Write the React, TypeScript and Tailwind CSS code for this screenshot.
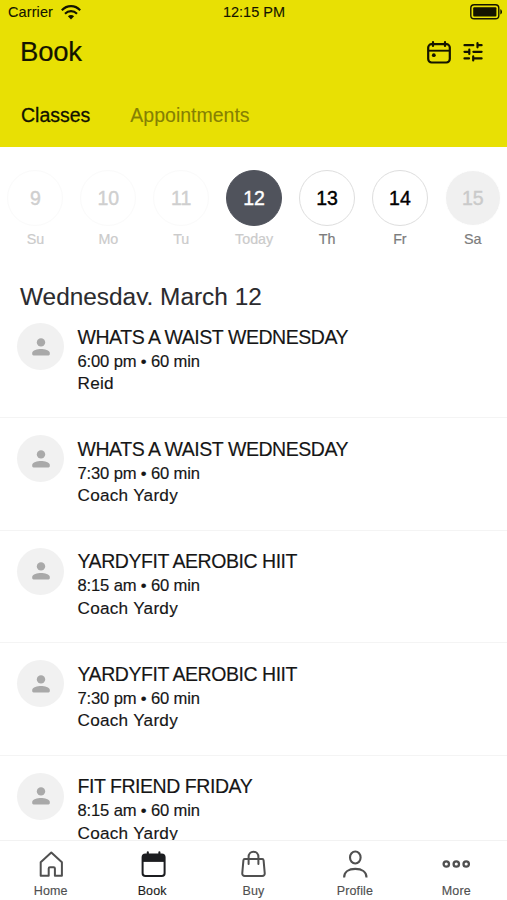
import React from 'react';
import clsx from 'clsx';

interface Day {
  date: number;
  label: string;
  state: 'past' | 'today' | 'open' | 'disabled';
}

interface ClassItem {
  id: number;
  title: string;
  time: string;
  coach: string;
}

const days: Day[] = [
  { date: 9, label: 'Su', state: 'past' },
  { date: 10, label: 'Mo', state: 'past' },
  { date: 11, label: 'Tu', state: 'past' },
  { date: 12, label: 'Today', state: 'today' },
  { date: 13, label: 'Th', state: 'open' },
  { date: 14, label: 'Fr', state: 'open' },
  { date: 15, label: 'Sa', state: 'disabled' },
];

const classes: ClassItem[] = [
  { id: 1, title: 'WHATS A WAIST WEDNESDAY', time: '6:00 pm • 60 min', coach: 'Reid' },
  { id: 2, title: 'WHATS A WAIST WEDNESDAY', time: '7:30 pm • 60 min', coach: 'Coach Yardy' },
  { id: 3, title: 'YARDYFIT AEROBIC HIIT', time: '8:15 am • 60 min', coach: 'Coach Yardy' },
  { id: 4, title: 'YARDYFIT AEROBIC HIIT', time: '7:30 pm • 60 min', coach: 'Coach Yardy' },
  { id: 5, title: 'FIT FRIEND FRIDAY', time: '8:15 am • 60 min', coach: 'Coach Yardy' },
];

const WifiIcon = () => (
  <svg width="20" height="15" viewBox="0 0 20 15" fill="none" stroke="currentColor" strokeWidth="2.1">
    <path d="M0.8 5.2C6 -0.3 14 -0.3 19.2 5.2" />
    <path d="M4 8.7C7.4 5.2 12.6 5.2 16 8.7" />
    <path d="M10 14.4L6.9 11.3C8.7 9.6 11.3 9.6 13.1 11.3Z" fill="currentColor" stroke="none" />
  </svg>
);

const BatteryIcon = () => (
  <svg width="33" height="16" viewBox="0 0 33 16" fill="none">
    <rect x="0.8" y="0.8" width="28" height="14" rx="3.4" stroke="currentColor" strokeWidth="1.4" />
    <rect x="3.2" y="3.2" width="23.2" height="9.2" rx="1" fill="currentColor" />
    <path d="M30.3 5.2C32.6 5.8 32.6 9.8 30.3 10.4Z" fill="currentColor" />
  </svg>
);

const CalendarIcon = () => (
  <svg width="24" height="23" viewBox="0 0 24 23" fill="none" stroke="currentColor" strokeWidth="2.2">
    <rect x="1.2" y="3.2" width="21.6" height="18.3" rx="3.4" />
    <path d="M1.2 9.7H22.8" strokeWidth="1.9" />
    <path d="M6 1.2V5M18 1.2V5" strokeLinecap="round" />
    <circle cx="6.8" cy="14.2" r="1.9" fill="currentColor" stroke="none" />
  </svg>
);

const TuneIcon = () => (
  <svg width="20" height="20" viewBox="0 0 20 20" fill="none" stroke="currentColor" strokeWidth="2.2" strokeLinecap="round">
    <path d="M1.5 3.2H10.3M14.5 3.2H18.6M14.5 1.2V5.3" />
    <path d="M1.5 9.8H6.3M6.3 7.7V11.9M10.4 9.8H18.6" />
    <path d="M1.5 16.4H6M10.2 16.4H18.6M10.2 14.4V18.5" />
  </svg>
);

const PersonIcon = () => (
  <svg width="18" height="18" viewBox="0 0 18 18" fill="currentColor">
    <circle cx="9" cy="4.4" r="4.2" />
    <path d="M0.2 15C0.2 12.2 5.5 11 9 11C12.5 11 17.8 12.2 17.8 15V16C17.8 16.8 17.3 17.4 16.5 17.4H1.5C0.7 17.4 0.2 16.8 0.2 16Z" />
  </svg>
);

const HomeIcon = () => (
  <svg width="28" height="28" viewBox="0 0 28 28" fill="none" stroke="currentColor" strokeWidth="2" strokeLinejoin="round">
    <path d="M3.7 12.3L14.3 2.6L24.9 12.3V25.8H17.9V18.6C17.9 17.8 17.4 17.3 16.6 17.3H13C12.2 17.3 11.7 17.8 11.7 18.6V25.8H3.7Z" />
  </svg>
);

const BookIcon = () => (
  <svg width="28" height="28" viewBox="0 0 28 28" fill="none" stroke="currentColor" strokeWidth="2">
    <rect x="4.6" y="4.4" width="22" height="21.6" rx="2.8" />
    <path d="M4.6 5H26.6V11.9H4.6Z" fill="currentColor" stroke="none" />
    <path d="M9.8 2.3V5M21.4 2.3V5" strokeWidth="2.1" strokeLinecap="round" />
  </svg>
);

const BagIcon = () => (
  <svg width="28" height="28" viewBox="0 0 28 28" fill="none" stroke="currentColor" strokeWidth="2" strokeLinecap="round" strokeLinejoin="round">
    <path d="M5.7 9H23.3C24.2 9 24.5 9.5 24.6 10.3L25.7 22.9C25.9 24.8 25 26 23.2 26H5.8C4 26 3.1 24.8 3.3 22.9L4.4 10.3C4.5 9.5 4.8 9 5.7 9Z" />
    <path d="M9.6 14V7C9.6 3.9 11.6 1.7 14.5 1.7C17.4 1.7 19.4 3.9 19.4 7V14" />
  </svg>
);

const ProfileIcon = () => (
  <svg width="28" height="28" viewBox="0 0 28 28" fill="none" stroke="currentColor" strokeWidth="2.1">
    <ellipse cx="14.3" cy="7.5" rx="5.3" ry="6" />
    <path d="M3.1 27.4C3.1 21.7 7.8 18.9 14.3 18.9C20.8 18.9 25.5 21.7 25.5 27.4" />
  </svg>
);

const MoreIcon = () => (
  <svg width="28" height="28" viewBox="0 0 28 28" fill="none" stroke="currentColor" strokeWidth="2.3">
    <circle cx="4.3" cy="14" r="2.7" />
    <circle cx="14.3" cy="14" r="2.7" />
    <circle cx="24.2" cy="14" r="2.7" />
  </svg>
);

const navItems = [
  { label: 'Home', icon: HomeIcon, active: false },
  { label: 'Book', icon: BookIcon, active: true },
  { label: 'Buy', icon: BagIcon, active: false },
  { label: 'Profile', icon: ProfileIcon, active: false },
  { label: 'More', icon: MoreIcon, active: false },
];

const Header: React.FC = () => (
  <header className="h-[147px] shrink-0 bg-[#e8e004] text-[#141400]">
    <div className="grid h-6 grid-cols-3 items-center pl-2 pr-1 text-[14.5px] leading-6 [-webkit-text-stroke:0.1px_currentColor]">
      <div className="flex items-center gap-2">
        <span className="tracking-[0.1px]">Carrier</span>
        <WifiIcon />
      </div>
      <span className="pr-[3px] text-center">12:15 PM</span>
      <div className="flex justify-end">
        <BatteryIcon />
      </div>
    </div>
    <div className="flex h-[56px] items-center justify-between pl-5 pr-6">
      <h1 className="text-[27.5px] tracking-[-0.2px] [-webkit-text-stroke:0.2px_currentColor]">Book</h1>
      <div className="flex items-center gap-3">
        <button title="Calendar">
          <CalendarIcon />
        </button>
        <button title="Filters">
          <TuneIcon />
        </button>
      </div>
    </div>
    <div className="flex gap-10 pl-[21px] pt-5 text-[19.5px] leading-[30px]">
      <button className="text-[#111100] [-webkit-text-stroke:0.3px_currentColor]">Classes</button>
      <button className="text-[#858003] [-webkit-text-stroke:0.1px_currentColor]">Appointments</button>
    </div>
  </header>
);

const DayPicker: React.FC = () => (
  <div className="-ml-[1px] grid grid-cols-[repeat(7,72.9px)] pt-[23px]">
    {days.map((day) => (
      <div key={day.date} className="flex flex-col items-center">
        <div
          className={clsx(
            'flex h-14 w-14 items-center justify-center rounded-full border pt-0.5 text-[19.5px] [-webkit-text-stroke:0.4px_currentColor]',
            day.state === 'past' && 'border-[#fafafa] text-[#cfcfcf]',
            day.state === 'today' && 'border-[#50535c] bg-[#50535c] text-white',
            day.state === 'open' && 'border-[#dedede] text-black',
            day.state === 'disabled' && 'border-white bg-[#f0f0f0] text-[#cacaca]'
          )}
        >
          {day.date}
        </div>
        <span
          className={clsx(
            'mt-[3px] text-[14.3px] leading-5 [-webkit-text-stroke:0.2px_currentColor]',
            day.state === 'past' || day.state === 'today' ? 'text-[#cbcbcb]' : 'text-[#7c7c7c]'
          )}
        >
          {day.label}
        </span>
      </div>
    ))}
  </div>
);

const ClassRow: React.FC<{ item: ClassItem }> = ({ item }) => (
  <div className="flex h-[112.4px] shrink-0 border-b border-[#f4f4f4] pl-[17px] text-[#161616] [-webkit-text-stroke:0.15px_currentColor]">
    <div className="mt-[17px] flex h-[47px] w-[47px] shrink-0 items-center justify-center rounded-full bg-[#f1f1f1] text-[#a9a9a9]">
      <PersonIcon />
    </div>
    <div className="pl-[13.5px] pt-[18.5px]">
      <p className="mb-0.5 text-[19.5px] leading-6 tracking-[-0.45px]">{item.title}</p>
      <p className="text-[16.6px] leading-[22.5px] tracking-[-0.15px]">{item.time}</p>
      <p className="text-[17.2px] leading-[20.5px] tracking-[0.25px]">{item.coach}</p>
    </div>
  </div>
);

const BottomNav: React.FC = () => (
  <nav className="grid h-[60px] shrink-0 grid-cols-5 border-t border-[#f2f2f2] bg-white">
    {navItems.map(({ label, icon: Icon, active }) => (
      <button
        key={label}
        className={clsx('flex flex-col items-center pt-[9px]', active ? 'text-[#1c1d20]' : 'text-[#505050]')}
      >
        <Icon />
        <span className="mt-[5px] text-[12.5px] leading-4 tracking-[0.1px] [-webkit-text-stroke:0.15px_currentColor]">
          {label}
        </span>
      </button>
    ))}
  </nav>
);

const App: React.FC = () => {
  return (
    <div className="flex h-[900px] w-[507px] flex-col overflow-hidden bg-white font-['Liberation_Sans',Arial,sans-serif]">
      <Header />
      <main className="flex min-h-0 flex-1 flex-col overflow-hidden">
        <div className="h-[159px] shrink-0 overflow-hidden">
          <DayPicker />
          <h2 className="mt-[33px] h-[23px] overflow-hidden pl-5 text-[24.4px] leading-[30px] text-[#2b2b2e] [-webkit-text-stroke:0.1px_currentColor]">
            Wednesday, March 12
          </h2>
        </div>
        {classes.map((item) => (
          <ClassRow key={item.id} item={item} />
        ))}
      </main>
      <BottomNav />
    </div>
  );
};

export default App;
